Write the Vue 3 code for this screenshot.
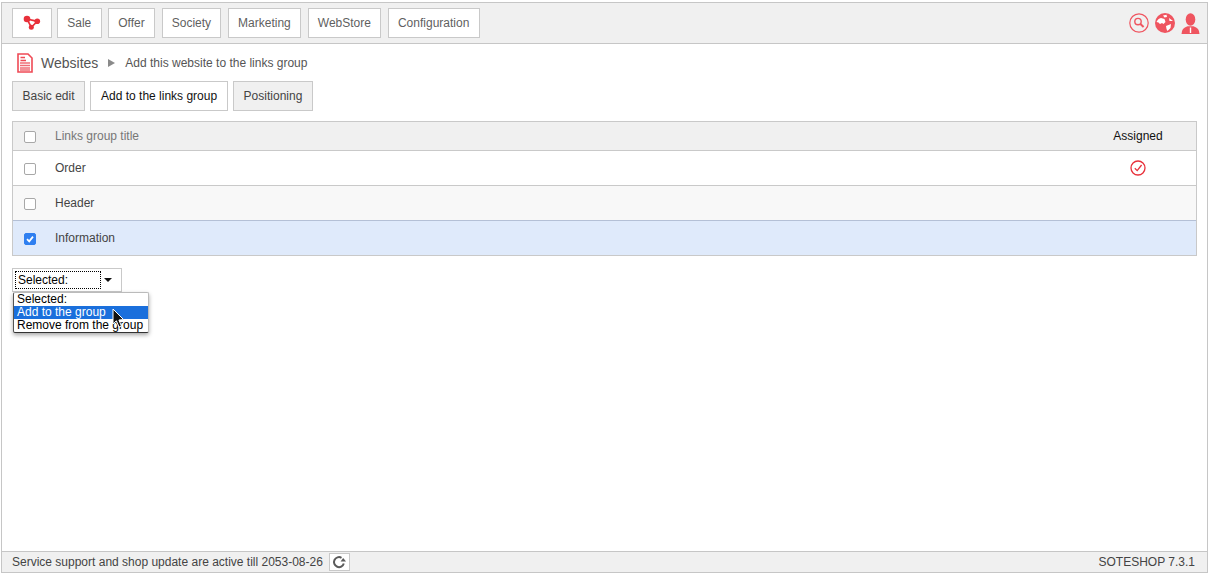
<script setup>
const navItems = ['Sale', 'Offer', 'Society', 'Marketing', 'WebStore', 'Configuration']
const tabs = [
  { label: 'Basic edit', active: false },
  { label: 'Add to the links group', active: true },
  { label: 'Positioning', active: false }
]
const rows = [
  { title: 'Order', assigned: true, cls: '' },
  { title: 'Header', assigned: false, cls: 'alt' },
  { title: 'Information', assigned: false, cls: 'sel', checked: true }
]
</script>

<template>
  <div class="frame">
    <header class="topbar">
      <nav class="nav">
        <a class="nav-btn logo">
          <svg width="20" height="18" viewBox="0 0 20 18">
            <path d="M5 5 L15.3 7.3 L9.3 13.3 Z" fill="none" stroke="#e8303a" stroke-width="1.7"/>
            <circle cx="5" cy="5" r="3.3" fill="#e8303a"/>
            <circle cx="15.3" cy="7.3" r="2.8" fill="#e8303a"/>
            <circle cx="9.3" cy="13.3" r="2.5" fill="#e8303a"/>
          </svg>
        </a>
        <a v-for="n in navItems" :key="n" class="nav-btn">{{ n }}</a>
      </nav>
      <div class="top-icons">
        <svg width="20" height="20" viewBox="0 0 20 20">
          <circle cx="10" cy="10" r="9.2" fill="none" stroke="#ef5560" stroke-width="1.2"/>
          <circle cx="9" cy="8.6" r="3.2" fill="none" stroke="#ef5560" stroke-width="1.4"/>
          <path d="M11.4 11 L14.6 14" stroke="#ef5560" stroke-width="2"/>
        </svg>
        <svg width="20" height="20" viewBox="0 0 20 20">
          <circle cx="10" cy="10" r="10" fill="#ef5560"/>
          <path d="M1.5 9 Q3 5.5 6 5 L9.5 6 L10.5 9 L8.5 11 L7 10 L5 11 L3.5 9.5 Z M8 2.5 L11.5 1.8 L12 4 L9.5 4.5 Z M11 13 L16 11 L15.5 15 L12.5 18 L11.5 16 Z M14 5 L18 8 L14.5 8 Z" fill="#fff"/>
        </svg>
        <svg width="19" height="21" viewBox="0 0 19 21">
          <ellipse cx="9.5" cy="6.5" rx="4.8" ry="6.2" fill="#ef5560"/>
          <path d="M0.5 21 Q0.5 15 6.5 13.2 L12.5 13.2 Q18.5 15 18.5 21 Z" fill="#ef5560"/>
          <path d="M9.5 14.5 L9.5 20" stroke="#fff" stroke-width="1.4"/>
        </svg>
      </div>
    </header>

    <main class="main">
      <div class="crumbs">
        <svg width="16" height="20" viewBox="0 0 16 20">
          <path d="M1 1 H11 L15 5 V19 H1 Z" fill="#fff" stroke="#ef4a55" stroke-width="1.6"/>
          <path d="M3.5 4.5 H8 M3.5 7.5 H9" stroke="#ef4a55" stroke-width="1.4"/>
          <path d="M3 10 H13 M3 12.5 H13 M3 15 H13 M3 17 H13" stroke="#ef6d76" stroke-width="1.5"/>
        </svg>
        <span class="crumb-title">Websites</span>
        <span class="crumb-arrow"></span>
        <span class="crumb-sub">Add this website to the links group</span>
      </div>

      <div class="tabs">
        <a v-for="t in tabs" :key="t.label" class="tab" :class="{ active: t.active }">{{ t.label }}</a>
      </div>

      <div class="table">
        <div class="row head">
          <span class="cb"></span>
          <span class="title">Links group title</span>
          <span class="assigned">Assigned</span>
        </div>
        <div v-for="r in rows" :key="r.title" class="row" :class="r.cls">
          <span class="cb" :class="{ checked: r.checked }">
            <svg v-if="r.checked" width="12" height="12" viewBox="0 0 12 12">
              <path d="M3 6.2 L5.2 8.4 L9 3.6" fill="none" stroke="#fff" stroke-width="1.7"/>
            </svg>
          </span>
          <span class="title">{{ r.title }}</span>
          <span class="assigned">
            <svg v-if="r.assigned" width="16" height="16" viewBox="0 0 16 16">
              <circle cx="8" cy="8" r="7" fill="none" stroke="#e8303a" stroke-width="1.3"/>
              <path d="M4.8 8.2 L7.2 10.6 L11.6 5" fill="none" stroke="#e8303a" stroke-width="1.3"/>
            </svg>
          </span>
        </div>
      </div>

      <div class="select-wrap">
        <div class="select">
          <span class="select-value">Selected:</span>
          <span class="select-caret"></span>
        </div>
        <ul class="menu">
          <li>Selected:</li>
          <li class="hot">Add to the group</li>
          <li>Remove from the group</li>
        </ul>
        <svg class="cursor" width="13" height="22" viewBox="0 0 13 22">
          <path d="M1 1 V16 L4.4 12.8 L7 19 L9.4 18 L6.9 12 L11.6 11.6 Z" fill="#111" stroke="#fff" stroke-width="1"/>
        </svg>
      </div>
    </main>

    <footer class="footer">
      <div class="foot-left">
        <span>Service support and shop update are active till 2053-08-26</span>
        <a class="refresh">
          <svg width="14" height="14" viewBox="0 0 14 14">
            <path d="M11.8 8.5 A5 5 0 1 1 9.5 2.8" fill="none" stroke="#5a5a5a" stroke-width="2"/>
            <path d="M8.6 6.6 H14 L11.2 3 Z" fill="#5a5a5a"/>
          </svg>
        </a>
      </div>
      <span class="version">SOTESHOP 7.3.1</span>
    </footer>
  </div>
</template>

<style>
html, body { margin: 0; padding: 0; background: #fff; }
</style>

<style scoped>
.frame {
  box-sizing: border-box;
  width: 1207px;
  height: 571px;
  margin: 2px 0 0 1px;
  border: 1px solid #c6c6c6;
  display: flex;
  flex-direction: column;
  font-family: "Liberation Sans", Arial, sans-serif;
  font-size: 12px;
  color: #555;
  background: #fff;
}
.topbar {
  box-sizing: border-box;
  height: 41px;
  flex: none;
  display: flex;
  justify-content: space-between;
  align-items: center;
  background: #f0f0f0;
  border-bottom: 1px solid #c6c6c6;
  padding: 0 0 0 10px;
}
.nav { display: flex; gap: 6.5px; }
.nav-btn {
  box-sizing: border-box;
  height: 30px;
  padding: 0 9.25px;
  display: flex;
  align-items: center;
  background: #fff;
  border: 1px solid #c9c9c9;
  color: #5f5f5f;
}
.logo { width: 40px; margin-right: -1.5px; padding: 0; justify-content: center; }
.top-icons { display: flex; align-items: center; gap: 6px; padding-right: 7px; }
.main { flex: 1; position: relative; padding: 0 10px; }
.crumbs { height: 37px; display: flex; align-items: center; }
.crumbs svg { margin: 0 0 0 5px; }
.crumb-title { font-size: 14px; color: #555; margin-left: 8px; }
.crumb-arrow {
  width: 0; height: 0;
  border-left: 7px solid #8a8a8a;
  border-top: 4px solid transparent;
  border-bottom: 4px solid transparent;
  margin: 1px 10px 0 10px;
}
.crumb-sub { color: #555; }
.tabs { display: flex; gap: 5px; }
.tab {
  box-sizing: border-box;
  height: 30px;
  padding: 0 9.5px;
  display: flex;
  align-items: center;
  background: #f0f0f0;
  border: 1px solid #c9c9c9;
  color: #444;
}
.tab.active { background: #fff; color: #111; padding: 0 10px; }
.table {
  margin-top: 10px;
  border: 1px solid #c9c9c9;
  border-bottom: 0;
}
.row {
  box-sizing: border-box;
  height: 35px;
  display: flex;
  align-items: center;
  border-bottom: 1px solid #c9c9c9;
  padding-left: 11px;
  color: #444;
}
.row.head { height: 29px; background: #f0f0f0; color: #777; }
.row.alt { background: #f8f8f8; }
.row.sel { background: #dfeafb; border-top: 1px solid #b4c0d6; margin-top: -1px; height: 36px; }
.cb {
  box-sizing: border-box;
  width: 12px;
  height: 12px;
  border: 1px solid #a8a8a8;
  border-radius: 2px;
  background: #fff;
  margin-top: 1px;
  display: flex;
}
.cb.checked { background: #2f7ff0; border-color: #2f7ff0; }
.cb.checked svg { margin: -1px; }
.title { margin-left: 19px; flex: 1; }
.assigned {
  width: 50px;
  margin-right: 33px;
  display: flex;
  justify-content: center;
  color: #111;
}
.select-wrap { position: relative; margin-top: 12px; width: 110px; }
.select {
  box-sizing: border-box;
  height: 24px;
  width: 110px;
  border: 1px solid #c9c9c9;
  background: #fff;
  display: flex;
  align-items: center;
  padding-left: 2px;
  color: #000;
}
.select-value {
  box-sizing: border-box;
  width: 86px;
  height: 18px;
  line-height: 16px;
  padding-left: 2px;
  border: 1px dotted #000;
}
.select-caret {
  width: 0; height: 0;
  margin-left: 3px;
  border-top: 4px solid #111;
  border-left: 4px solid transparent;
  border-right: 4px solid transparent;
}
.menu {
  position: absolute;
  left: 1px;
  top: 24px;
  width: 136px;
  box-sizing: border-box;
  margin: 0;
  padding: 0;
  list-style: none;
  background: #fff;
  color: #000;
  border: 1px solid #bbb;
  border-bottom: 1px solid #333;
  border-left: 1px solid #555;
  box-shadow: 0 2px 4px rgba(0,0,0,.35);
  border-radius: 2px;
}
.menu li { height: 13px; line-height: 13px; padding-left: 3px; }
.menu li.hot { background: #1a6fdc; color: #fff; }
.cursor { position: absolute; left: 100px; top: 40px; }
.footer {
  box-sizing: border-box;
  height: 21px;
  flex: none;
  display: flex;
  justify-content: space-between;
  align-items: center;
  background: #f0f0f0;
  border-top: 1px solid #c6c6c6;
  padding: 0 12px 0 10px;
  color: #444;
}
.foot-left { display: flex; align-items: center; gap: 6px; }
.refresh {
  box-sizing: border-box;
  width: 21px;
  height: 18px;
  background: #fff;
  border: 1px solid #c9c9c9;
  display: flex;
  align-items: center;
  justify-content: center;
}
</style>
